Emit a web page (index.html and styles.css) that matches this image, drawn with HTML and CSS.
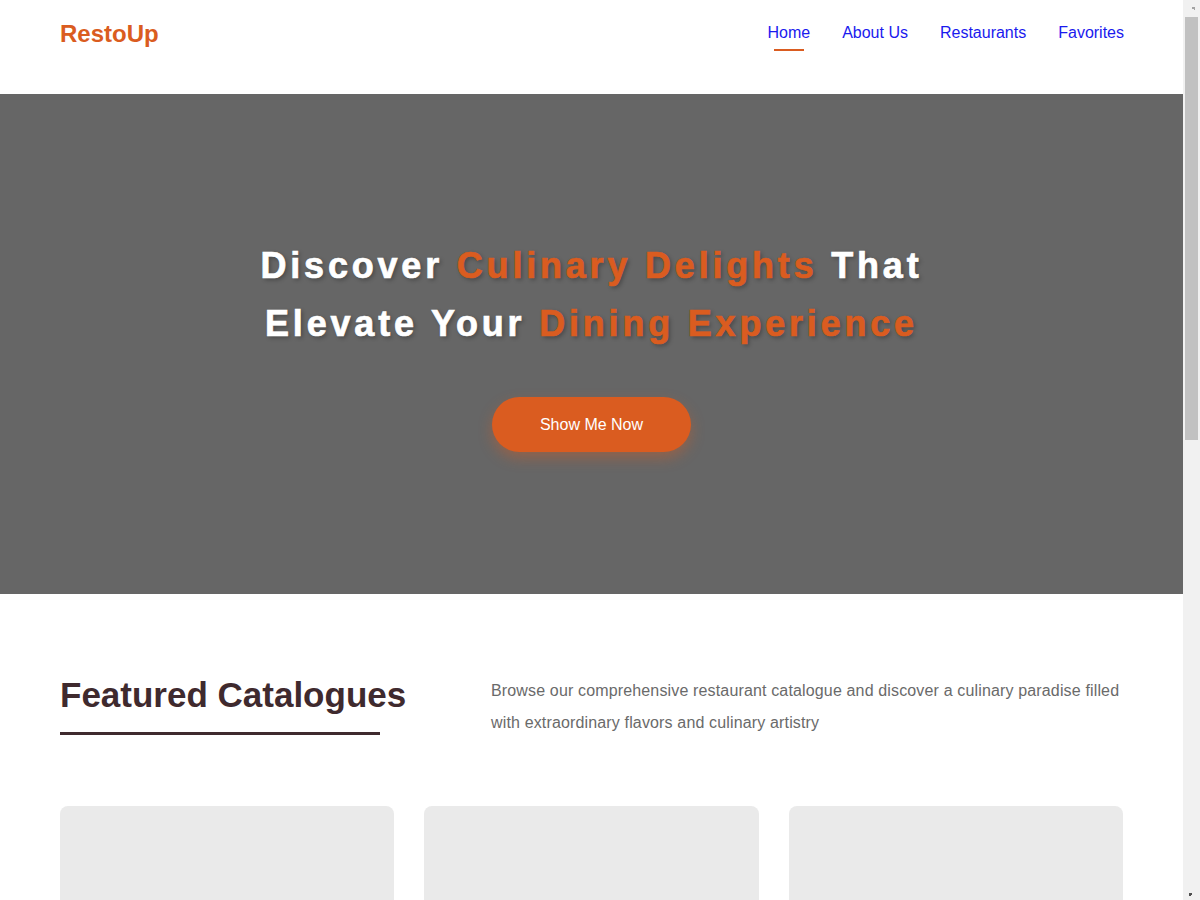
FILE: index.html
```html
<!DOCTYPE html>
<html lang="en">
<head>
<meta charset="utf-8">
<title>RestoUp</title>
<link rel="stylesheet" href="styles.css">
</head>
<body>
<header class="site-header">
  <a class="logo" href="#">RestoUp</a>
  <nav class="nav">
    <a class="nav-link active" href="#">Home</a>
    <a class="nav-link" href="#">About Us</a>
    <a class="nav-link" href="#">Restaurants</a>
    <a class="nav-link" href="#">Favorites</a>
  </nav>
</header>
<section class="hero">
  <h1 class="hero-title">Discover <span class="accent">Culinary Delights</span> That<br>Elevate Your <span class="accent">Dining Experience</span></h1>
  <a class="hero-btn" href="#">Show Me Now</a>
</section>
<main class="catalogue">
  <div class="intro">
    <h2 class="section-title">Featured Catalogues</h2>
    <p class="section-desc">Browse our comprehensive restaurant catalogue and discover a culinary paradise filled with extraordinary flavors and culinary artistry</p>
  </div>
  <div class="cards">
    <div class="card"></div>
    <div class="card"></div>
    <div class="card"></div>
    <div class="card"></div>
    <div class="card"></div>
    <div class="card"></div>
  </div>
</main>
</body>
</html>
```
FILE: styles.css
```css
* { box-sizing: border-box; }

/* the page keeps room for a classic 17px scrollbar track at the right */
html {
  background-color: #f1f1f1;
  background-image:
    linear-gradient(#c1c1c1, #c1c1c1),
    linear-gradient(to top, #f1f1f1 50%, transparent 50%),
    linear-gradient(45deg, transparent 50%, #a3a3a3 50%),
    linear-gradient(to bottom, #f1f1f1 50%, transparent 50%),
    linear-gradient(-45deg, transparent 50%, #505050 50%);
  background-repeat: no-repeat;
  background-attachment: fixed;
  background-size: 13px 423px, 8px 4px, 6px 6px, 8px 4px, 6px 6px;
  background-position:
    right 2px top 17px,
    right 4px top 3px,
    right 5px top 5px,
    right 4px bottom 5px,
    right 5px bottom 3px;
}

body {
  margin: 0 17px 0 0;
  font-family: "Liberation Sans", Arial, sans-serif;
  background: #ffffff;
}

.site-header {
  display: flex;
  justify-content: space-between;
  align-items: flex-start;
  height: 94px;
  padding: 20px 60px 0;
  background: #ffffff;
}

.logo {
  font-size: 24px;
  font-weight: bold;
  color: #da5c20;
  text-decoration: none;
}

.nav {
  display: flex;
  gap: 32px;
  margin-top: 4px;
  margin-right: -1px;
}

.nav-link {
  display: flex;
  flex-direction: column;
  align-items: center;
  font-size: 16px;
  color: #1a1aee;
  text-decoration: none;
}

.nav-link.active::after {
  content: "";
  display: block;
  width: 30px;
  height: 2px;
  margin-top: 7px;
  background: #da5c20;
}

.hero {
  height: 500px;
  background: #666666;
  display: flex;
  flex-direction: column;
  align-items: center;
  justify-content: center;
  text-align: center;
  box-shadow: 0 1px 1px rgba(0, 0, 0, 0.1);
}

.hero-title {
  margin: 1px 0 45px;
  font-size: 36px;
  line-height: 1.6;
  font-weight: bold;
  letter-spacing: 3.8px;
  color: #ffffff;
  -webkit-text-stroke: 0.7px currentColor;
  text-shadow: 2px 2px 4px rgba(0, 0, 0, 0.3);
}

.accent { color: #da5c20; }

.hero-btn {
  display: inline-block;
  padding: 18px 48px;
  font-size: 16px;
  line-height: 19px;
  color: #ffffff;
  background: #da5c20;
  border-radius: 30px;
  text-decoration: none;
  box-shadow: 0 6px 14px rgba(218, 92, 32, 0.4);
}

.catalogue {
  padding: 81px 60px 80px;
  background: #ffffff;
}

.intro {
  display: grid;
  grid-template-columns: 399px 1fr;
  gap: 32px;
  align-items: start;
  margin-bottom: 67px;
}

.section-title {
  margin: 0;
  font-size: 35px;
  font-weight: bold;
  color: #3f2a2e;
}

.section-title::after {
  content: "";
  display: block;
  width: 320px;
  height: 3px;
  margin-top: 17px;
  background: #3f2a2e;
}

.section-desc {
  margin: 0;
  font-size: 16px;
  line-height: 32px;
  letter-spacing: 0.15px;
  color: #6a6a6a;
}

.cards {
  display: grid;
  grid-template-columns: repeat(3, 1fr);
  gap: 30px;
}

.card {
  height: 463px;
  background: #eaeaea;
  border-radius: 8px;
}
```
